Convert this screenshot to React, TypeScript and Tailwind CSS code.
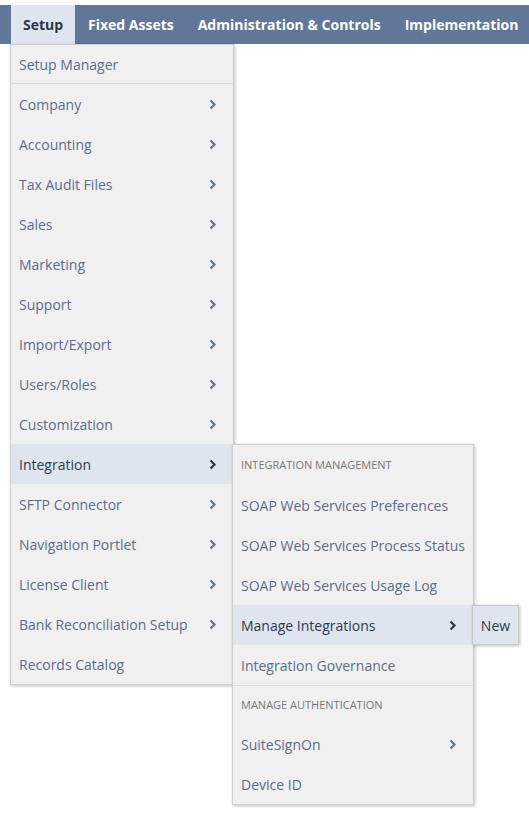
import React from "react";

const Chevron = ({ dark }: { dark?: boolean }) => (
  <svg width="8" height="11" viewBox="0 0 8 11" className="shrink-0">
    <polyline
      points="1.5,1.5 5.5,5.5 1.5,9.5"
      fill="none"
      stroke={dark ? "#2a3650" : "#5f7393"}
      strokeWidth="2.2"
    />
  </svg>
);

const mainItems: { label: string; sub?: boolean }[] = [
  { label: "Company", sub: true },
  { label: "Accounting", sub: true },
  { label: "Tax Audit Files", sub: true },
  { label: "Sales", sub: true },
  { label: "Marketing", sub: true },
  { label: "Support", sub: true },
  { label: "Import/Export", sub: true },
  { label: "Users/Roles", sub: true },
  { label: "Customization", sub: true },
  { label: "Integration", sub: true },
  { label: "SFTP Connector", sub: true },
  { label: "Navigation Portlet", sub: true },
  { label: "License Client", sub: true },
  { label: "Bank Reconciliation Setup", sub: true },
  { label: "Records Catalog" },
];

const font = { fontFamily: '"Open Sans", "Noto Sans", sans-serif' };

function IntegrationSub() {
  const row =
    "h-10 flex items-center justify-between whitespace-nowrap pl-[8px] pr-[16px] text-[14px] text-[#5a6d8c]";
  const header = "flex items-center pl-[8px] text-[11px] text-[#777777] uppercase whitespace-nowrap";
  return (
    <div className="absolute left-[221px] top-0 w-[242px] bg-[#f0f0f0] border border-[#cfcfcf] shadow-[1px_1px_3px_rgba(0,0,0,0.25)] z-20">
      <div className={header + " h-10"}>Integration Management</div>
      <div className={row}>SOAP Web Services Preferences</div>
      <div className={row}>SOAP Web Services Process Status</div>
      <div className={row}>SOAP Web Services Usage Log</div>
      <div className="relative">
        <div className={row + " bg-[#dfe5ee] !text-[#2e3a4f]"}>
          <span>Manage Integrations</span>
          <Chevron dark />
        </div>
        <div className="absolute left-[239px] top-0 h-10 w-[47px] flex items-center justify-center bg-[#dfe5ee] border border-[#c9c9c9] shadow-[1px_1px_3px_rgba(0,0,0,0.25)] text-[14px] text-[#2e3a4f]">
          New
        </div>
      </div>
      <div className={row}>Integration Governance</div>
      <div className="border-t border-[#dadde3]" />
      <div className={header + " h-[38px]"}>Manage Authentication</div>
      <div className={row}>
        <span>SuiteSignOn</span>
        <Chevron />
      </div>
      <div className={row}>Device ID</div>
    </div>
  );
}

export default function App() {
  const navItem =
    "h-full px-[12px] shrink-0 whitespace-nowrap flex items-center text-white font-bold text-[14px]";
  return (
    <div className="w-[529px] h-[817px] bg-white relative overflow-hidden" style={font}>
      <div className="h-[5px]" />
      <nav className="h-[39px] bg-[#607799] flex items-stretch pl-[11px]">
        <div className="relative shrink-0">
          <div className="h-full w-[64px] flex items-center justify-center bg-[#dfe5ee] text-[#2d3644] font-bold text-[14px]">
            Setup
          </div>
          <div className="absolute left-[-1px] top-[39px] w-[224px] bg-[#f0f0f0] border border-[#cfcfcf] shadow-[1px_1px_3px_rgba(0,0,0,0.25)] z-10">
            <div className="h-[39px] flex items-center pl-[8px] text-[14px] text-[#5a6d8c] border-b border-[#d6dbe3]">
              Setup Manager
            </div>
            {mainItems.map((it) => {
              const active = it.label === "Integration";
              return (
                <div key={it.label} className="relative">
                  <div
                    className={
                      "h-10 flex items-center justify-between whitespace-nowrap pl-[8px] pr-[16px] text-[14px] " +
                      (active ? "bg-[#dfe5ee] text-[#2e3a4f]" : "text-[#5a6d8c]")
                    }
                  >
                    <span>{it.label}</span>
                    {it.sub && <Chevron dark={active} />}
                  </div>
                  {active && <IntegrationSub />}
                </div>
              );
            })}
          </div>
        </div>
        <div className={navItem + " ml-[1px]"}>Fixed Assets</div>
        <div className={navItem}>Administration &amp; Controls</div>
        <div className={navItem}>Implementation</div>
      </nav>
    </div>
  );
}
